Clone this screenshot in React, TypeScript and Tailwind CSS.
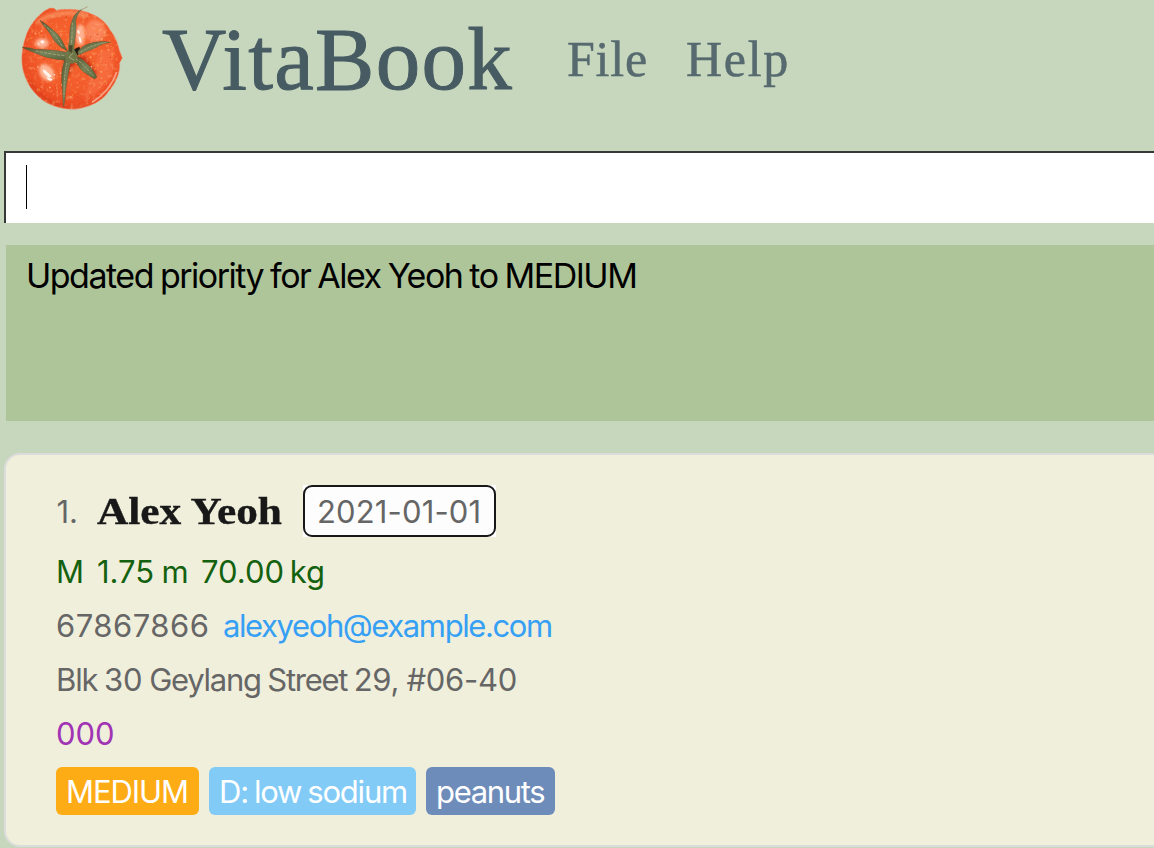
const BODY =
  "M136 31L150 24L162 25L169 31C200 25 244 28 272 41C300 50 322 72 330 90C345 108 355 132 358 151L367 174L359 188C361 222 345 251 325 275C306 304 270 320 236 326C198 332 157 319 130 302C98 278 79 249 69 210C62 178 66 142 77 111C87 78 110 49 136 31Z";

const DROPS = Array.from({ length: 120 }, (_, i) => {
  const r = 136 * Math.sqrt((((i * 61) % 120) + 0.5) / 120);
  const a = i * i * 1.37 + i * 0.7;
  return {
    x: 213 + r * Math.cos(a),
    y: 178 + r * Math.sin(a),
    r: 0.9 + ((i * 7) % 5) * 0.5,
    c: ["#ff9a4d", "#ffa468", "#f98a2c", "#e0481a", "#ffc49a"][(i * 3) % 5],
  };
});

function TomatoLogo() {
  return (
    <svg width="150" height="120" viewBox="0 0 450 360" className="block shrink-0">
      <defs>
        <radialGradient id="skin" cx="0.52" cy="0.42" r="0.6">
          <stop offset="0" stopColor="#f5662f" />
          <stop offset="0.6" stopColor="#f35c2b" />
          <stop offset="0.88" stopColor="#ec4c22" />
          <stop offset="1" stopColor="#e4542f" />
        </radialGradient>
        <linearGradient id="leaf" x1="0" y1="0" x2="1" y2="1">
          <stop offset="0" stopColor="#55562f" />
          <stop offset="0.5" stopColor="#79835a" />
          <stop offset="1" stopColor="#56633a" />
        </linearGradient>
        <clipPath id="body"><path d={BODY} /></clipPath>
        <filter id="soft" x="-50%" y="-50%" width="200%" height="200%">
          <feGaussianBlur stdDeviation="5" />
        </filter>
        <filter id="grain" x="0" y="0" width="100%" height="100%">
          <feTurbulence type="fractalNoise" baseFrequency="0.09" numOctaves="2" seed="4" />
          <feColorMatrix values="0 0 0 0 1  0 0 0 0 0.62  0 0 0 0 0.3  3.5 0 0 0 -1.85" />
        </filter>
      </defs>
      <path d={BODY} fill="url(#skin)" stroke="#ec9474" strokeWidth="3" strokeDasharray="4 3" />
      <g clipPath="url(#body)">
        <g filter="url(#soft)">
          <path d="M86 242C112 286 154 314 208 320" fill="none" stroke="#de3d18" strokeWidth="10" />
          <path d="M110 70C140 38 210 32 262 48" fill="none" stroke="#f88a5a" strokeWidth="12" />
          <ellipse cx="126" cy="130" rx="20" ry="15" fill="#ffb69a" />
          <ellipse cx="140" cy="218" rx="20" ry="28" fill="#ffb898" transform="rotate(-35 140 218)" />
          <ellipse cx="241" cy="105" rx="14" ry="32" fill="#ffb394" />
          <ellipse cx="286" cy="92" rx="30" ry="34" fill="#fa8358" />
          <path d="M300 150L340 150L335 230L290 280L250 300Z" fill="#f87145" opacity="0.7" />
          <path d="M185 168L215 160L258 170L294 222L270 224L226 188L202 235L184 270L194 190Z" fill="#c93613" />
        </g>
        <rect x="60" y="20" width="310" height="310" filter="url(#grain)" opacity="0.32" />
        <path d="M350 216C337 254 310 286 276 307" fill="none" stroke="#f8a184" strokeWidth="5" />
      </g>
      {DROPS.map((d, i) => (
        <circle key={i} cx={d.x} cy={d.y} r={d.r} fill={d.c} />
      ))}
      <g fill="#fff4ec">
        <path d="M120 124l9-4 5 7-8 5zM128 208l8 3 10 9 8 8-6 6-10-8-8-9zM139 231l10 4 9 3-5 5-9-4zM232 89l6 3 1 10-6-3zM235 109l7 4 3 15-6-2z" />
        <circle cx="116" cy="132" r="2.5" />
        <circle cx="163" cy="224" r="2" />
      </g>
      <path d="M222 148L238 140L242 154L230 168L220 164Z" fill="#241b10" />
      <g fill="url(#leaf)" stroke="#4f4727" strokeWidth="1">
        <path d="M202 152C184 144 166 130 156 110C146 92 130 80 120 61C138 72 152 84 168 98C184 112 190 132 202 152Z" />
        <path d="M206 143C211 116 206 91 215 65C221 47 228 37 245 28C235 39 229 50 227 64C231 92 224 118 222 145Z" />
        <path d="M233 156C243 139 266 129 288 126C304 123 318 124 333 127C315 130 302 133 290 142C270 152 250 157 236 166Z" />
        <path d="M200 157C173 151 139 149 104 148C90 143 78 143 66 142C82 151 98 156 118 164C148 177 178 180 203 180Z" />
        <path d="M224 170C238 169 252 180 260 190C273 204 283 215 291 231L284 237C267 226 245 216 236 198C230 188 222 182 224 170Z" />
        <path d="M194 180C187 200 184 219 185 242C188 268 187 294 191 321C196 303 195 278 199 258C203 230 207 205 213 184Z" />
      </g>
      <path d="M193 159L205 151L205 132L220 131L224 151L232 165L232 186L216 191L197 182Z" fill="#6f7748" />
      <path d="M207 136L218 136L216 158L206 154Z" fill="#4d4a2b" />
      <g fill="none" stroke="#a9ae83" strokeWidth="2.5" strokeLinecap="round">
        <path d="M132 74C144 86 166 101 187 139M217 69C216 92 216 119 214 134M108 153C136 158 168 166 194 166" strokeDasharray="7 6" />
        <path d="M229 178C246 187 265 212 280 228M200 190C193 224 192 255 192 289M243 156C268 138 294 132 316 128" strokeDasharray="6 5" />
        <path d="M218 160L207 172L222 180" />
      </g>
      <path d="M245 29L263 20" stroke="#9b6c49" strokeWidth="1.5" />
    </svg>
  );
}

export default function App() {
  return (
    <div className="flex h-[848px] w-[1154px] flex-col overflow-hidden bg-[#c7d7bd] font-['Inter',sans-serif]">
      <header className="flex h-[151px] items-start font-['Liberation_Serif',serif] text-[#475b63]">
        <TomatoLogo />
        <h1 className="ml-[12px] mt-[7px] w-[353px] whitespace-nowrap text-[89px] leading-[104px] tracking-[1.3px] [-webkit-text-stroke:1px_#475b63]">VitaBook</h1>
        <nav className="ml-[52px] mt-[31px] flex gap-[38px] text-[50px] leading-[56px] text-[#566a6f] [-webkit-text-stroke:0.5px_#566a6f]">
          <span className="tracking-[0.8px]">File</span>
          <span className="tracking-[1.7px]">Help</span>
        </nav>
      </header>
      <div className="ml-[4px] flex h-[72px] shrink-0 border-l-2 border-t-2 border-[#383838] bg-white pl-[20px] pt-[12px]">
        <span className="h-[44px] w-px bg-black" />
      </div>
      <div className="ml-[6px] mt-[22px] h-[176px] shrink-0 bg-[#aec599] pl-[20px] pt-[10px] text-[34px] leading-[42px] text-black">
        <p className="whitespace-nowrap tracking-[-1.5px] [word-spacing:-1.1px]">Updated priority for Alex Yeoh to MEDIUM</p>
      </div>
      <main className="-mr-6 ml-[4px] mt-[32px] h-[394px] shrink-0 rounded-[16px] border-2 border-[#dcdcdc] bg-[#f0efdc] pl-[50px] pt-[30px] text-[31px] text-[#666666]">
        <div className="flex h-[52px] items-center">
          <span className="w-[41px] pl-[0.5px] pt-[2px]">1.</span>
          <h2 className="w-[206px] origin-left scale-x-[1.14] whitespace-nowrap font-['Liberation_Serif',serif] text-[38px] font-bold text-[#181818] [-webkit-text-stroke:0.4px_#181818]">Alex Yeoh</h2>
          <span className="bg-white">
            <span className="flex h-[52px] w-[193px] items-center rounded-[9px] border-2 border-[#181818] bg-[#fdfdfd] pl-[12px] pt-[2px] tracking-[0.15px]">2021-01-01</span>
          </span>
        </div>
        <div className="mt-[8px] flex h-[54px] items-center text-[#14610f]">
          <span className="w-[41px]">M</span>
          <span className="w-[104px] [word-spacing:-1.5px]">1.75 m</span>
          <span className="[word-spacing:-3px]">70.00 kg</span>
        </div>
        <div className="flex h-[54px] items-center">
          <span className="w-[167px] tracking-[0.5px]">67867866</span>
          <span className="tracking-[-1.4px] text-[#36a0f4]">alexyeoh@example.com</span>
        </div>
        <p className="h-[54px] whitespace-nowrap leading-[54px] [word-spacing:-1px]">
          <span className="tracking-[-1.15px]">Blk </span>30
          <span className="tracking-[-1.25px]"> Geylang Street </span>
          <span className="tracking-[-0.3px]">29, #06-40</span>
        </p>
        <div className="flex h-[54px] items-center text-[#a034b4]">000</div>
        <div className="mt-[6px] flex gap-[10px] whitespace-nowrap text-white">
          <span className="flex h-[48px] w-[143px] items-center rounded-[6px] bg-[#feac15] pl-[10px] pt-[2px] tracking-[-1.1px]">MEDIUM</span>
          <span className="flex h-[48px] w-[207px] items-center rounded-[6px] bg-[#82cbf7] pl-[10px] pt-[2px] tracking-[-1.2px] [word-spacing:-1.5px]">D: low sodium</span>
          <span className="flex h-[48px] w-[129px] items-center rounded-[6px] bg-[#6e8cba] pl-[10px] pt-[2px] tracking-[-1.35px]">peanuts</span>
        </div>
      </main>
    </div>
  );
}
